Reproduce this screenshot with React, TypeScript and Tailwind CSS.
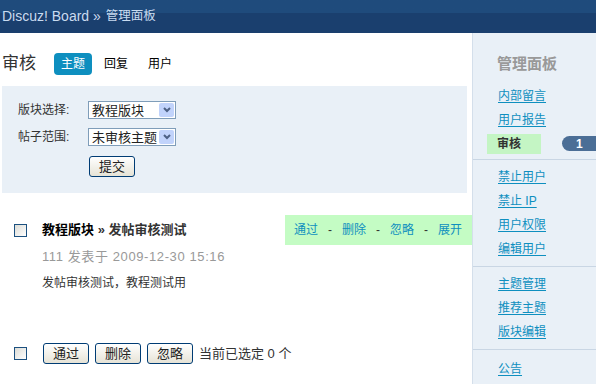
import React from "react";

const font = { fontFamily: '"Liberation Sans", "Noto Sans CJK SC", sans-serif' };

const Checkbox = () => (
  <span className="block h-[13px] w-[13px] border border-[#1c5180] bg-gradient-to-br from-[#dcdcd6] to-white" />
);

const XpButton = ({ label }: { label: string }) => (
  <button className="h-[21px] w-[46px] rounded-[3px] border border-[#003c74] bg-gradient-to-b from-white to-[#e6e3d6] text-[13px] leading-none text-[#222]">
    {label}
  </button>
);

const FakeSelect = ({ value }: { value: string }) => (
  <div className="flex h-[18px] w-[88px] items-center border border-[#7f9db9] bg-white pl-[3px] pr-px">
    <span className="flex-1 whitespace-nowrap text-[13px] leading-none text-[#222]">{value}</span>
    <span className="flex h-[14px] w-[15px] shrink-0 items-center justify-center rounded-[2px] bg-[#c1d3fb]">
      <svg width="8" height="6" viewBox="0 0 8 6">
        <path d="M1 1 L4 4 L7 1" stroke="#4d6185" strokeWidth="2" fill="none" />
      </svg>
    </span>
  </div>
);

const SideLink = ({ label }: { label: string }) => (
  <div className="flex h-6 items-center pl-[25px]">
    <a className="text-[12px] text-[#0e8fbf] underline underline-offset-2">{label}</a>
  </div>
);

const Separator = () => <div className="h-[2px] border-t border-[#c9d6e4] bg-white" />;

export default function App() {
  return (
    <div className="h-[384px] w-[596px] overflow-hidden bg-white text-[12px] text-[#333]" style={font}>
      {/* header */}
      <div className="flex h-[33px] items-center bg-gradient-to-b from-[#1f4b7c] from-40% to-[#1a3f6e] to-40% pl-[2px] text-[14px] text-[#c9dbf0]">
        Discuz! Board »<span className="ml-[5px] text-[12.5px]">管理面板</span>
      </div>

      <div className="flex h-[351px]">
        {/* main */}
        <div className="flex w-[472px] shrink-0 flex-col pl-[2px]">
          <div className="mt-5 flex h-[22px] items-center">
            <span className="text-[17px] text-[#333]">审核</span>
            <span className="ml-[18px] flex h-[22px] w-[38px] items-center justify-center rounded-[4px] bg-[#0e8fbf] text-[12px] text-white">
              主题
            </span>
            <span className="ml-[12px] text-[12px] text-black">回复</span>
            <span className="ml-[20px] text-[12px] text-black">用户</span>
          </div>

          <div className="mr-[5px] mt-[11px] flex h-[107px] flex-col gap-[9px] bg-[#e9f0f7] pl-4 pt-[15px]">
            <div className="flex items-center">
              <span className="w-[70px] text-[12px] text-[#333]">版块选择:</span>
              <FakeSelect value="教程版块" />
            </div>
            <div className="flex items-center">
              <span className="w-[70px] text-[12px] text-[#333]">帖子范围:</span>
              <FakeSelect value="未审核主题" />
            </div>
            <div className="ml-[71px] mt-px">
              <XpButton label="提交" />
            </div>
          </div>

          {/* post */}
          <div className="mt-[22px] flex h-[30px] items-center">
            <span className="ml-3">
              <Checkbox />
            </span>
            <span className="ml-[15px] whitespace-nowrap text-[13px] font-bold text-black">
              教程版块 <span className="text-[#333]">» 发帖审核测试</span>
            </span>
            <div className="ml-auto flex h-[30px] w-[187px] shrink-0 items-center gap-[10px] whitespace-nowrap bg-[#c4fcc4] pl-[9px] text-[12px] text-[#0e8fbf]">
              <span>通过</span>
              <span className="text-[#333]">-</span>
              <span>删除</span>
              <span className="text-[#333]">-</span>
              <span>忽略</span>
              <span className="text-[#333]">-</span>
              <span>展开</span>
            </div>
          </div>
          <div className="ml-[40px] mt-[2px] text-[13px] leading-[20px] tracking-[0.6px] text-[#999]">111 发表于 2009-12-30 15:16</div>
          <div className="ml-[40px] mt-[6px] text-[12px] leading-[20px] text-[#333]">发帖审核测试，教程测试用</div>

          <div className="mt-[50px] flex items-center">
            <span className="ml-3">
              <Checkbox />
            </span>
            <span className="ml-[16px] flex gap-[6px]">
              <XpButton label="通过" />
              <XpButton label="删除" />
              <XpButton label="忽略" />
            </span>
            <span className="ml-[6px] text-[13px] text-[#333]">当前已选定 0 个</span>
          </div>
        </div>

        {/* sidebar */}
        <div className="flex w-[124px] flex-col border-l border-[#d4dfeb] bg-[#e9f0f7]">
          <div className="mt-[20px] pl-[24px] text-[15px] font-bold text-[#999]">管理面板</div>
          <div className="mt-[8px] pb-[3px]">
            <SideLink label="内部留言" />
            <SideLink label="用户报告" />
            <div className="flex h-6 items-center">
              <span className="ml-[14px] flex h-5 w-[54px] items-center bg-[#c4f5c4] pl-[10px] text-[12px] font-bold text-[#333]">
                审核
              </span>
              <span className="ml-auto flex h-[15px] w-[34px] items-center rounded-l-full bg-[#4b6e96] pl-[14px] text-[12px] font-bold leading-none text-white">
                1
              </span>
            </div>
          </div>
          <Separator />
          <div className="py-[5px]">
            <SideLink label="禁止用户" />
            <SideLink label="禁止 IP" />
            <SideLink label="用户权限" />
            <SideLink label="编辑用户" />
          </div>
          <Separator />
          <div className="py-[5px]">
            <SideLink label="主题管理" />
            <SideLink label="推荐主题" />
            <SideLink label="版块编辑" />
          </div>
          <Separator />
          <div className="pb-[5px] pt-[7px]">
            <SideLink label="公告" />
          </div>
        </div>
      </div>
    </div>
  );
}
